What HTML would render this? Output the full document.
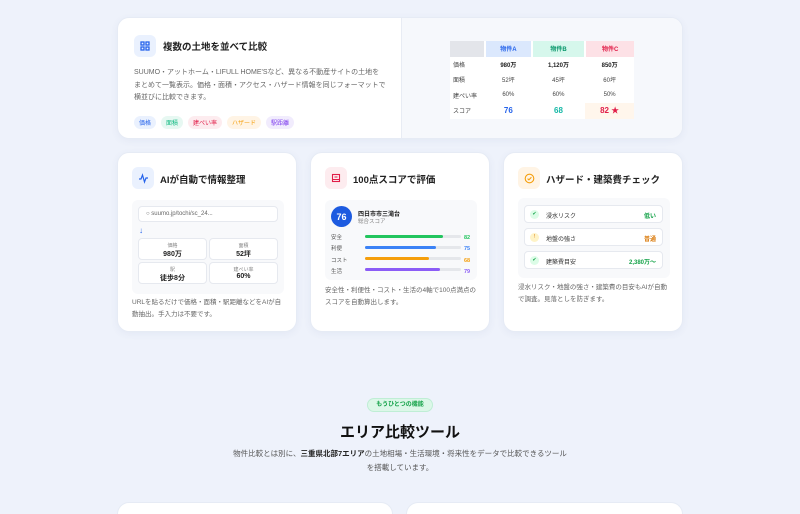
<!DOCTYPE html>
<html><head><meta charset="utf-8"><style>
*{box-sizing:border-box;margin:0;padding:0}
html,body{width:800px;height:514px;overflow:hidden}
body{background:#eef2fb;font-family:"Liberation Sans","Noto Sans CJK JP",sans-serif;color:#222;position:relative}
.abs{position:absolute}
.card{position:absolute;background:#fff;border-radius:12px;box-shadow:0 2px 8px rgba(60,80,140,.06);border:1px solid #e6ebf5}
.ic{position:absolute;width:22px;height:22px;border-radius:6px;display:flex;align-items:center;justify-content:center}
.ttl{position:absolute;font-size:9.5px;font-weight:bold;color:#222}
.txt{position:absolute;font-size:7px;line-height:12.5px;color:#666}
.tag{display:inline-block;font-size:6px;padding:2px 5px;border-radius:7px;margin-right:5px}
table{border-collapse:collapse;font-size:6px}
td{height:15.5px;text-align:center;color:#444}
td:first-child{text-align:left;padding-left:3px;width:35px}
.box{position:absolute;background:#fff;border:1px solid #e6e9ef;border-radius:4px}
.bar{position:absolute;height:3px;border-radius:2px;background:#e5e7eb}
</style></head><body>

<div class="card" style="left:117px;top:17px;width:566px;height:122px;overflow:hidden">
 <div class="abs" style="left:283px;top:0;width:283px;height:122px;background:#f6f8fc;border-left:1px solid #e8ecf4"></div>
 <div class="ic" style="left:16px;top:17px;background:#eaf1fe"><svg width="10" height="10" viewBox="0 0 10 10" fill="none" stroke="#2563eb" stroke-width="1.3"><rect x="1" y="1" width="3" height="3"/><rect x="6" y="1" width="3" height="3"/><rect x="1" y="6" width="3" height="3"/><rect x="6" y="6" width="3" height="3"/></svg></div>
 <div class="ttl" style="left:45px;top:21px">複数の土地を並べて比較</div>
 <div class="txt" style="left:16px;top:49px;width:252px">SUUMO・アットホーム・LIFULL HOME'Sなど、異なる不動産サイトの土地をまとめて一覧表示。価格・面積・アクセス・ハザード情報を同じフォーマットで横並びに比較できます。</div>
 <div class="abs" style="left:16px;top:94px;white-space:nowrap">
  <span class="tag" style="background:#eaf1fe;color:#2563eb">価格</span><span class="tag" style="background:#e7f8f2;color:#10b981">面積</span><span class="tag" style="background:#fdecef;color:#e11d48">建ぺい率</span><span class="tag" style="background:#fff4e5;color:#f59e0b">ハザード</span><span class="tag" style="background:#f1ecfd;color:#7c3aed">駅距離</span>
 </div>
 <div class="abs" style="left:332px;top:23px;width:184px;background:#fff">
 <table style="width:184px">
  <tr><td style="background:#e3e5ea;height:14px"></td><td style="background:#dbe8fd;color:#2563eb;font-weight:bold;border-left:2px solid #fff">物件A</td><td style="background:#d6f7ec;color:#059669;font-weight:bold;border-left:2px solid #fff">物件B</td><td style="background:#fde1e6;color:#e11d48;font-weight:bold;border-left:2px solid #fff">物件C</td></tr>
  <tr><td>価格</td><td style="font-weight:bold;color:#222">980万</td><td style="font-weight:bold;color:#222">1,120万</td><td style="font-weight:bold;color:#222">850万</td></tr>
  <tr><td>面積</td><td>52坪</td><td>45坪</td><td>60坪</td></tr>
  <tr><td>建ぺい率</td><td>60%</td><td>60%</td><td>50%</td></tr>
  <tr><td>スコア</td><td style="color:#2563eb;font-weight:bold;font-size:8px">76</td><td style="color:#14b8a6;font-weight:bold;font-size:8px">68</td><td style="color:#e11d48;font-weight:bold;font-size:8px;background:#fff6ec">82 ★</td></tr>
 </table></div>
</div>

<div class="card" style="left:117px;top:152px;width:180px;height:180px">
 <div class="ic" style="left:14px;top:14px;background:#eaf1fe"><svg width="11" height="11" viewBox="0 0 11 11" fill="none" stroke="#2563eb" stroke-width="1.2"><path d="M1 6h2l1.5-4 2 7 1.5-4H10"/></svg></div>
 <div class="ttl" style="left:42px;top:19px">AIが自動で情報整理</div>
 <div class="abs" style="left:14px;top:47px;width:152px;height:94px;background:#f8f9fb;border-radius:6px">
  <div class="box" style="left:6px;top:6px;width:140px;height:16px;font-size:6px;color:#666;padding:4px 7px">○ suumo.jp/tochi/sc_24...</div>
  <div class="abs" style="left:7px;top:26px;font-size:8px;color:#2563eb;font-weight:bold">↓</div>
  <div class="box" style="left:6px;top:38px;width:69px;height:22px;text-align:center;font-size:5px;color:#888;padding-top:3px">価格<br><b style="font-size:7px;color:#222">980万</b></div>
  <div class="box" style="left:77px;top:38px;width:69px;height:22px;text-align:center;font-size:5px;color:#888;padding-top:3px">面積<br><b style="font-size:7px;color:#222">52坪</b></div>
  <div class="box" style="left:6px;top:62px;width:69px;height:22px;text-align:center;font-size:5px;color:#888;padding-top:3px">駅<br><b style="font-size:7px;color:#222">徒歩8分</b></div>
  <div class="box" style="left:77px;top:62px;width:69px;height:22px;text-align:center;font-size:5px;color:#888;padding-top:3px">建ぺい率<br><b style="font-size:7px;color:#222">60%</b></div>
 </div>
 <div class="txt" style="left:14px;top:144px;width:150px;font-size:6.5px;line-height:12px">URLを貼るだけで価格・面積・駅距離などをAIが自動抽出。手入力は不要です。</div>
</div>

<div class="card" style="left:310px;top:152px;width:180px;height:180px">
 <div class="ic" style="left:14px;top:14px;background:#fdecef"><svg width="10" height="10" viewBox="0 0 10 10" fill="none" stroke="#e11d48" stroke-width="1.1"><rect x="1.5" y="1.5" width="7" height="7"/><path d="M3.5 4h3M1.5 6.5h7"/></svg></div>
 <div class="ttl" style="left:42px;top:19px">100点スコアで評価</div>
 <div class="abs" style="left:14px;top:47px;width:152px;height:80px;background:#f8f9fb;border-radius:6px">
  <div class="abs" style="left:6px;top:6px;width:21px;height:21px;border-radius:50%;background:#1d5be0;color:#fff;font-weight:bold;font-size:9px;display:flex;align-items:center;justify-content:center">76</div>
  <div class="abs" style="left:33px;top:9px;font-size:6px;font-weight:bold;color:#222">四日市市三滝台</div>
  <div class="abs" style="left:33px;top:17px;font-size:5.5px;color:#888">総合スコア</div>
  <div class="abs" style="left:6px;top:33px;font-size:5.5px;color:#555;line-height:11.3px">安全<br>利便<br>コスト<br>生活</div>
  <div class="bar" style="left:40px;top:35px;width:96px"></div><div class="bar" style="left:40px;top:35px;width:78px;background:#22c55e"></div>
  <div class="bar" style="left:40px;top:46px;width:96px"></div><div class="bar" style="left:40px;top:46px;width:71px;background:#3b82f6"></div>
  <div class="bar" style="left:40px;top:57px;width:96px"></div><div class="bar" style="left:40px;top:57px;width:64px;background:#f59e0b"></div>
  <div class="bar" style="left:40px;top:68px;width:96px"></div><div class="bar" style="left:40px;top:68px;width:75px;background:#8b5cf6"></div>
  <div class="abs" style="left:139px;top:33px;font-size:5.5px;font-weight:bold;line-height:11.3px"><span style="color:#22c55e">82</span><br><span style="color:#3b82f6">75</span><br><span style="color:#f59e0b">68</span><br><span style="color:#8b5cf6">79</span></div>
 </div>
 <div class="txt" style="left:14px;top:132px;width:152px;font-size:6.5px;line-height:12px">安全性・利便性・コスト・生活の4軸で100点満点のスコアを自動算出します。</div>
</div>

<div class="card" style="left:503px;top:152px;width:180px;height:180px">
 <div class="ic" style="left:14px;top:14px;background:#fff4e5"><svg width="11" height="11" viewBox="0 0 11 11" fill="none" stroke="#f59e0b" stroke-width="1.1"><circle cx="5.5" cy="5.5" r="4.3"/><path d="M3.6 5.6l1.3 1.3 2.5-2.6"/></svg></div>
 <div class="ttl" style="left:42px;top:19px">ハザード・建築費チェック</div>
 <div class="abs" style="left:14px;top:45px;width:152px;height:80px;background:#f8f9fb;border-radius:6px">
  <div class="box" style="left:6px;top:7px;width:139px;height:18px"><span class="abs" style="left:5px;top:4px;width:9px;height:9px;border-radius:50%;background:#dcfce7;color:#16a34a;font-size:5px;text-align:center;line-height:9px">✔</span><span class="abs" style="left:21px;top:5px;font-size:6px;color:#333">浸水リスク</span><span class="abs" style="right:6px;top:5px;font-size:6px;color:#16a34a;font-weight:bold">低い</span></div>
  <div class="box" style="left:6px;top:30px;width:139px;height:18px"><span class="abs" style="left:5px;top:4px;width:9px;height:9px;border-radius:50%;background:#fef3c7;color:#d97706;font-size:5px;text-align:center;line-height:9px">!</span><span class="abs" style="left:21px;top:5px;font-size:6px;color:#333">地盤の強さ</span><span class="abs" style="right:6px;top:5px;font-size:6px;color:#d97706;font-weight:bold">普通</span></div>
  <div class="box" style="left:6px;top:53px;width:139px;height:18px"><span class="abs" style="left:5px;top:4px;width:9px;height:9px;border-radius:50%;background:#dcfce7;color:#16a34a;font-size:5px;text-align:center;line-height:9px">✔</span><span class="abs" style="left:21px;top:5px;font-size:6px;color:#333">建築費目安</span><span class="abs" style="right:6px;top:5px;font-size:6px;color:#16a34a;font-weight:bold">2,380万〜</span></div>
 </div>
 <div class="txt" style="left:14px;top:129px;width:152px;font-size:6.5px;line-height:12px">浸水リスク・地盤の強さ・建築費の目安もAIが自動で調査。見落としを防ぎます。</div>
</div>

<div class="abs" style="left:367px;top:398px;width:66px;height:14px;border-radius:7px;background:#dcf7e8;border:1px solid #bfeed5;color:#16a34a;font-size:6px;font-weight:bold;text-align:center;line-height:12px">もうひとつの機能</div>
<div class="abs" style="left:0;top:421px;width:800px;text-align:center;font-size:15px;font-weight:bold;color:#111">エリア比較ツール</div>
<div class="abs" style="left:230px;top:447px;width:340px;text-align:center;font-size:7.5px;line-height:14px;color:#555">物件比較とは別に、<b style="color:#222">三重県北部7エリア</b>の土地相場・生活環境・将来性をデータで比較できるツールを搭載しています。</div>

<div class="abs" style="left:117px;top:502px;width:276px;height:12px;background:#fff;border-radius:12px 12px 0 0;border:1px solid #e6ebf5;border-bottom:none"></div>
<div class="abs" style="left:406px;top:502px;width:277px;height:12px;background:#fff;border-radius:12px 12px 0 0;border:1px solid #e6ebf5;border-bottom:none"></div>
</body></html>
